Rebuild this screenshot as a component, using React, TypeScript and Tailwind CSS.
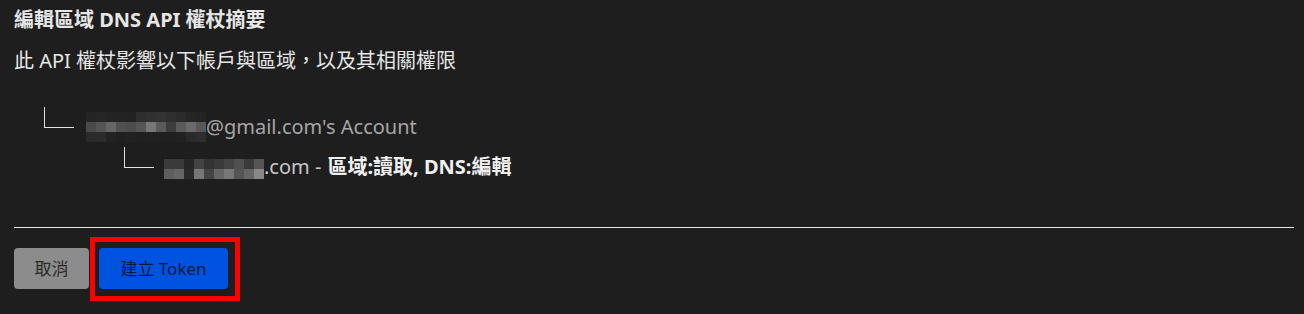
import React from "react";

const blur1: string[][] = [
  ["#242424", "#262626", "#232323", "#232323", "#222222", "#2e2e2e", "#303030", "#333333", "#2f2f2f", "#2b2b2b", "#262626", "#242424"],
  ["#4a4a4a", "#555555", "#666666", "#505050", "#4d4d4d", "#555555", "#777777", "#5a5a5a", "#3c3c3c", "#5a5a5a", "#6a6a6a", "#585858"],
  ["#2a2a2a", "#2c2c2c", "#222222", "#202020", "#222222", "#202020", "#212121", "#202020", "#202020", "#222222", "#2a2a2a", "#2e2e2e"],
];

const blur2: string[][] = [
  ["#3a3a3a", "#3a3a3a", "#262626", "#444444", "#333333", "#3a3a3a", "#444444", "#505050", "#3a3a3a", "#555555"],
  ["#5e5e5e", "#666666", "#2a2a2a", "#777777", "#444444", "#666666", "#777777", "#555555", "#666666", "#888888"],
];

function Pixels({ data, size }: { data: string[][]; size: number }) {
  return (
    <div className="flex flex-col">
      {data.map((row, i) => (
        <div key={i} className="flex">
          {row.map((c, j) => (
            <div key={j} style={{ backgroundColor: c, width: size, height: size }} />
          ))}
        </div>
      ))}
    </div>
  );
}

export default function App() {
  return (
    <div
      className="w-[1304px] h-[314px] bg-[#1e1e1e] text-[#e8e8e8] pt-[6px] pl-[14px] pr-[10px]"
      style={{ fontFamily: '"Noto Sans", "Noto Sans CJK TC", sans-serif' }}
    >
      <div className="text-[20px] font-bold leading-[28px] text-[#e6e6e6]">編輯區域 DNS API 權杖摘要</div>
      <div className="mt-[13px] text-[20px] leading-[28px] text-[#e6e6e6]">此 API 權杖影響以下帳戶與區域，以及其相關權限</div>

      <div className="mt-[32px]">
        <div className="flex h-[40px] pl-[30px]">
          <div className="w-[30px] h-[21px] border-l border-b border-[#e0e0e0] shrink-0" />
          <div className="ml-[12px] flex items-center">
            <Pixels data={blur1} size={10} />
            <span className="text-[20px] leading-[40px] text-[#a6a6a6]">@gmail.com's Account</span>
          </div>
        </div>
        <div className="flex h-[40px] pl-[110px]">
          <div className="w-[30px] h-[21px] border-l border-b border-[#e0e0e0] shrink-0" />
          <div className="ml-[10px] flex items-center">
            <div className="mt-[4px]">
              <Pixels data={blur2} size={10} />
            </div>
            <span className="text-[20px] leading-[40px] text-[#c8c8c8]">.com - </span>
            <span className="ml-[6px] text-[20px] leading-[40px] font-bold text-[#f0f0f0]">區域:讀取, DNS:編輯</span>
          </div>
        </div>
      </div>

      <div className="mt-[40px] h-px bg-[#e6e6e6]" />

      <div className="mt-[20px] flex gap-[10px]">
        <button className="w-[75px] h-[41px] rounded-[4px] bg-[#8c8c8c] text-[#2a2a2a] text-[17px]">取消</button>
        <div className="relative">
          <button className="w-[129px] h-[41px] rounded-[4px] bg-[#0052e0] text-[#0b1a3c] text-[17px]">建立 Token</button>
          <div className="absolute -left-[9px] -right-[12px] -top-[11px] -bottom-[12px] border-[5px] border-[#ff0000] pointer-events-none" />
        </div>
      </div>
    </div>
  );
}
